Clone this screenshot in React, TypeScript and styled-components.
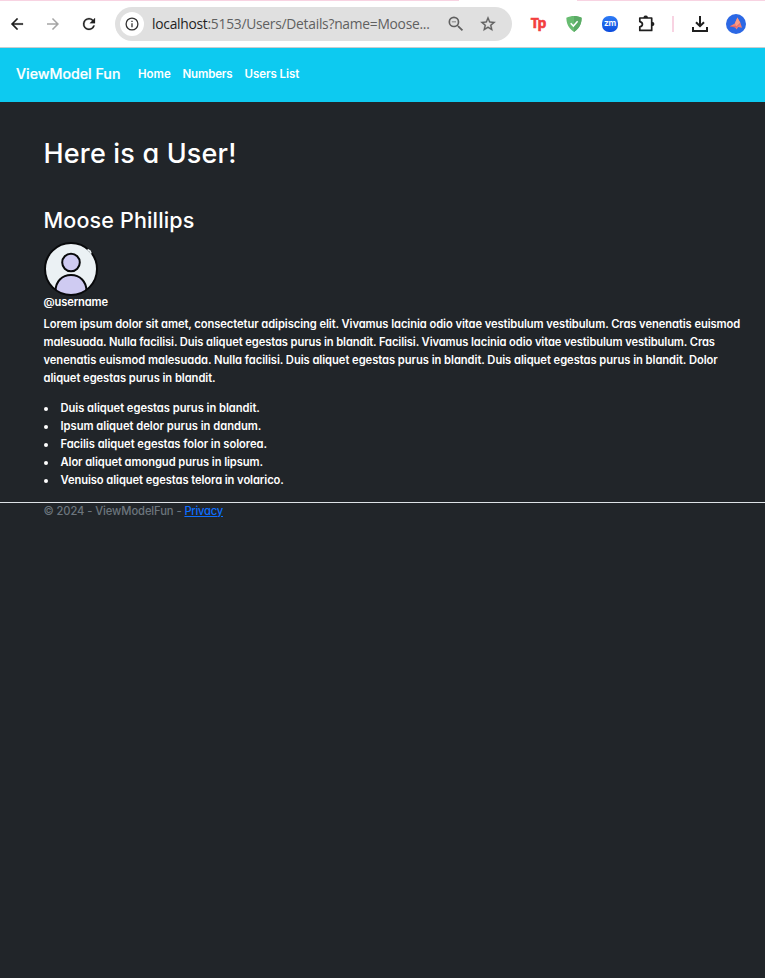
import React from 'react';
import styled, { createGlobalStyle } from 'styled-components';

const GlobalStyle = createGlobalStyle`
  * { box-sizing: border-box; }
  html, body { margin: 0; background: #212529; }
  body {
    min-height: 100vh;
    overflow-x: hidden;
    color: #fff;
    font-family: Inter, 'Liberation Sans', sans-serif;
    font-feature-settings: 'cv11';
  }
  h1, h2, ul { margin: 0; padding: 0; }
  svg { display: block; flex: none; }
`;

/* Browser chrome */

const TabEdge = styled.div`
  display: flex;
  justify-content: space-between;
  height: 1px;
  background: #fff;
`;
const TabStrip = styled.div<{ $width: number }>`
  width: ${(p) => p.$width}px;
  background: #f8d3e2;
`;
const Toolbar = styled.div`
  display: flex;
  align-items: center;
  height: 47px;
  background: #fff;
  border-bottom: 1px solid #c8ccce;
`;
const NavButtons = styled.div`
  display: flex;
  margin-left: -1px;
`;
const IconCell = styled.div<{ $color?: string }>`
  display: flex;
  align-items: center;
  justify-content: center;
  width: 36px;
  height: 34px;
  color: ${(p) => p.$color ?? '#1f1f1f'};
`;
const AddressBar = styled.div`
  display: flex;
  align-items: center;
  width: 397px;
  height: 34px;
  margin: 0 8px;
  padding-left: 5px;
  border-radius: 17px;
  background: #e0e0e0;
`;
const SiteInfo = styled.div`
  display: grid;
  place-items: center;
  width: 24px;
  height: 24px;
  border-radius: 50%;
  background: #fff;
  color: #333;
`;
const Url = styled.div`
  width: 288px;
  margin-left: 8px;
  white-space: nowrap;
  font: 400 13.8px/20px 'Open Sans', sans-serif;
  letter-spacing: -0.255px;
  color: #606060;
`;
const Host = styled.span`
  color: #1f1f1f;
`;
const AddressAction = styled.div`
  display: grid;
  place-items: center;
  width: 32px;
  height: 32px;
  color: #606060;
`;
const Divider = styled.div`
  width: 2px;
  height: 16px;
  margin: 0 8px;
  background: #f8d3e2;
`;
const TpMark = styled.div`
  display: flex;
  align-items: flex-start;
  height: 18px;
  font: 700 14px/16px 'Open Sans', sans-serif;
  letter-spacing: -1.2px;
  color: #f33f3f;
  -webkit-text-stroke: 0.6px #f33f3f;
`;
const ZmBadge = styled.div`
  width: 16px;
  height: 16px;
  border-radius: 7px;
  background: linear-gradient(#2f7cf5, #0b4bdd);
  color: #fff;
  font: 600 8.5px/15px Inter, sans-serif;
  letter-spacing: -0.2px;
  text-align: center;
`;

/* Page */

const Navbar = styled.nav`
  display: flex;
  align-items: flex-start;
  height: 54px;
  padding: 16px 16px 0;
  background: #0dcaf0;
`;
const Brand = styled.div`
  width: 122px;
  font-size: 14.2px;
  line-height: 20px;
  font-weight: 500;
  -webkit-text-stroke: 0.2px #fff;
`;
const NavLink = styled.div<{ $width: number; $spacing: number }>`
  width: ${(p) => p.$width}px;
  padding-top: 1px;
  font-size: 11.5px;
  line-height: 18px;
  font-weight: 600;
  white-space: nowrap;
  letter-spacing: ${(p) => p.$spacing}px;
`;
const Main = styled.main`
  padding: 34px 0 0 43.5px;
`;
const Title = styled.h1`
  font-size: 27px;
  line-height: 36px;
  font-weight: 500;
  letter-spacing: 0.18px;
`;
const UserName = styled.h2`
  margin-top: 35px;
  font-size: 21.5px;
  line-height: 26px;
  font-weight: 500;
  letter-spacing: 0.16px;
`;
const AvatarFrame = styled.div`
  width: 54px;
  height: 54px;
  margin-top: 9px;
`;
const TextLine = styled.div<{ $spacing?: number }>`
  height: 18px;
  font-size: 11.2px;
  line-height: 18px;
  font-weight: 600;
  white-space: nowrap;
  letter-spacing: ${(p) => p.$spacing ?? 0}px;
`;
const Handle = styled.div`
  margin-top: -3px;
`;
const Bio = styled.div`
  margin-top: 4px;
`;
const Facts = styled.ul`
  margin-top: 12px;
  list-style: none;
`;
const Fact = styled.li`
  display: flex;
  align-items: center;
`;
const Bullet = styled.span`
  width: 4px;
  height: 4px;
  margin: 1px 12.5px 0 0.5px;
  border-radius: 50%;
  background: #fff;
`;
const Footer = styled.footer`
  margin-top: 13px;
  padding-left: 43.5px;
  border-top: 1px solid #dee2e6;
  font-size: 11.2px;
  line-height: 16px;
  font-weight: 500;
  letter-spacing: -0.09px;
  color: #6c757d;
  white-space: pre;
`;
const PrivacyLink = styled.a`
  color: #0d6efd;
  letter-spacing: -0.24px;
  text-decoration: underline;
`;

const bio = [
  { text: 'Lorem ipsum dolor sit amet, consectetur adipiscing elit. Vivamus lacinia odio vitae vestibulum vestibulum. Cras venenatis euismod', spacing: -0.081 },
  { text: 'malesuada. Nulla facilisi. Duis aliquet egestas purus in blandit. Facilisi. Vivamus lacinia odio vitae vestibulum vestibulum. Cras', spacing: -0.11 },
  { text: 'venenatis euismod malesuada. Nulla facilisi. Duis aliquet egestas purus in blandit. Duis aliquet egestas purus in blandit. Dolor', spacing: -0.05 },
  { text: 'aliquet egestas purus in blandit.', spacing: -0.06 },
];
const facts = [
  { text: 'Duis aliquet egestas purus in blandit.', spacing: -0.04 },
  { text: 'Ipsum aliquet delor purus in dandum.', spacing: -0.02 },
  { text: 'Facilis aliquet egestas folor in solorea.', spacing: -0.04 },
  { text: 'Alor aliquet amongud purus in lipsum.', spacing: -0.085 },
  { text: 'Venuiso aliquet egestas telora in volarico.', spacing: -0.085 },
];

const Glyph = ({ d, size = 18, weight = 0 }: { d: string; size?: number; weight?: number }) => (
  <svg width={size} height={size} viewBox="0 0 24 24" fill="currentColor" stroke="currentColor" strokeWidth={weight}>
    <path d={d} />
  </svg>
);

const paths = {
  back: 'M20 11H7.83l5.59-5.59L12 4l-8 8 8 8 1.41-1.41L7.83 13H20v-2z',
  forward: 'M12 4l-1.41 1.41L16.17 11H4v2h12.17l-5.58 5.59L12 20l8-8z',
  reload: 'M17.65 6.35A7.96 7.96 0 0 0 12 4a8 8 0 1 0 7.73 10h-2.08A6 6 0 1 1 12 6c1.66 0 3.14.69 4.22 1.78L13 11h7V4l-2.35 2.35z',
  zoomOut: 'M15.5 14h-.79l-.28-.27A6.47 6.47 0 0 0 16 9.5 6.5 6.5 0 1 0 9.5 16c1.61 0 3.09-.59 4.23-1.57l.27.28v.79l5 4.99L20.49 19l-4.99-5zm-6 0a4.5 4.5 0 1 1 0-9 4.5 4.5 0 0 1 0 9zM7 9h5v1H7z',
  star: 'M22 9.24l-7.19-.62L12 2 9.19 8.63 2 9.24l5.46 4.73L5.82 21 12 17.27 18.18 21l-1.63-7.03L22 9.24zM12 15.4l-3.76 2.27 1-4.28-3.32-2.88 4.38-.38L12 6.1l1.71 4.04 4.38.38-3.32 2.88 1 4.28L12 15.4z',
};

const InfoIcon = () => (
  <svg width="14" height="14" viewBox="0 0 14 14" fill="none" stroke="currentColor" strokeWidth="1.3">
    <circle cx="7" cy="7" r="5.9" />
    <path d="M7 6.3v4M7 3.7v1.4" />
  </svg>
);
const ShieldIcon = () => (
  <svg width="16" height="16" viewBox="0 0 16 16">
    <path d="M8 0C5.5 0 2.7.6.4 1.7c0 2.6 0 9.2 7.6 14.3 7.6-5.1 7.6-11.7 7.6-14.3C13.3.6 10.5 0 8 0z" fill="#68bc71" />
    <path d="M8 0v16c7.6-5.1 7.6-11.7 7.6-14.3C13.3.6 10.5 0 8 0z" fill="#5bab66" />
    <path d="M4.7 7.2l2.7 2.9 4.2-4.8" fill="none" stroke="#fff" strokeWidth="1.5" />
  </svg>
);
const PuzzleIcon = () => (
  <svg width="18" height="18" viewBox="0 0 18 18" fill="none" stroke="currentColor" strokeWidth="1.7" strokeLinejoin="round">
    <path d="M2.8 3h11.9v12.4H2.8v-3.6c3.5-.8 3.5-4.4 0-5.200V3z" />
    <path d="M6.500 3V1.900a2.300 2 0 0 1 4.400 0V3zM14.700 7.100h.8a1.900 1.900 0 0 1 0 3.800h-.8z" fill="currentColor" stroke="none" />
  </svg>
);
const DownloadIcon = () => (
  <svg width="16" height="16" viewBox="0 0 16 16" fill="none" stroke="currentColor" strokeWidth="2">
    <path d="M8 0v10M4 6.2l4 4 4-4M1 11v4h14v-4" />
  </svg>
);
const ProfileIcon = () => (
  <svg width="20" height="20" viewBox="0 0 20 20">
    <circle cx="10" cy="10" r="10" fill="#2c68e4" />
    <path d="M3.800 12.200l5-2.700L11.400 3.500l3 5.500 1.600 4.700-3.800-.8-1.600 2.700-1.400-2.200z" fill="#f47f72" />
    <path d="M11.400 3.500l3 5.500-3.700 3.500-1.900-3z" fill="#fa9c86" />
    <path d="M4 12.300l6.500.5 3.700-3.500" fill="none" stroke="#c9566a" strokeWidth=".6" />
  </svg>
);
const Avatar = () => (
  <svg width="54" height="54" viewBox="0 0 54 54">
    <defs>
      <clipPath id="face"><circle cx="27" cy="27" r="26" /></clipPath>
    </defs>
    <circle cx="27" cy="27" r="26" fill="#ebf1f4" />
    <g clipPath="url(#face)" fill="#cfcbf2" stroke="#08090b" strokeWidth="2">
      <circle cx="27" cy="20.5" r="8.8" />
      <path d="M11.500 56V49c0-9.500 6.500-16 15.500-16s15.500 6.500 15.500 16v7z" />
    </g>
    <circle cx="27" cy="27" r="26" fill="none" stroke="#08090b" strokeWidth="2" />
    <path d="M43.500 7.500l2.500 1.500 1 2.500" fill="none" stroke="#ebf1f4" strokeWidth="1.800" />
  </svg>
);

export default function App() {
  return (
    <>
      <GlobalStyle />
      <TabEdge>
        <TabStrip $width={459} />
        <TabStrip $width={188} />
      </TabEdge>
      <Toolbar>
        <NavButtons>
          <IconCell><Glyph d={paths.back} weight={0.3} /></IconCell>
          <IconCell $color="#a5a5a5"><Glyph d={paths.forward} /></IconCell>
          <IconCell><Glyph d={paths.reload} weight={0.3} /></IconCell>
        </NavButtons>
        <AddressBar>
          <SiteInfo><InfoIcon /></SiteInfo>
          <Url><Host>localhost</Host>:5153/Users/Details?name=Moose...</Url>
          <AddressAction><Glyph d={paths.zoomOut} size={20} /></AddressAction>
          <AddressAction><Glyph d={paths.star} weight={0.4} /></AddressAction>
        </AddressBar>
        <IconCell><TpMark>Tp</TpMark></IconCell>
        <IconCell><ShieldIcon /></IconCell>
        <IconCell><ZmBadge>zm</ZmBadge></IconCell>
        <IconCell><PuzzleIcon /></IconCell>
        <Divider />
        <IconCell><DownloadIcon /></IconCell>
        <IconCell><ProfileIcon /></IconCell>
      </Toolbar>
      <Navbar>
        <Brand>ViewModel Fun</Brand>
        <NavLink $width={44.5} $spacing={0}>Home</NavLink>
        <NavLink $width={62} $spacing={-0.15}>Numbers</NavLink>
        <NavLink $width={60} $spacing={-0.05}>Users List</NavLink>
      </Navbar>
      <Main>
        <Title>Here is a User!</Title>
        <UserName>Moose Phillips</UserName>
        <AvatarFrame><Avatar /></AvatarFrame>
        <Handle><TextLine $spacing={-0.15}>@username</TextLine></Handle>
        <Bio>
          {bio.map((line) => (
            <TextLine key={line.text} $spacing={line.spacing}>{line.text}</TextLine>
          ))}
        </Bio>
        <Facts>
          {facts.map((fact) => (
            <Fact key={fact.text}>
              <Bullet />
              <TextLine $spacing={fact.spacing}>{fact.text}</TextLine>
            </Fact>
          ))}
        </Facts>
      </Main>
      <Footer>© 2024 - ViewModelFun - <PrivacyLink>Privacy</PrivacyLink></Footer>
    </>
  );
}
